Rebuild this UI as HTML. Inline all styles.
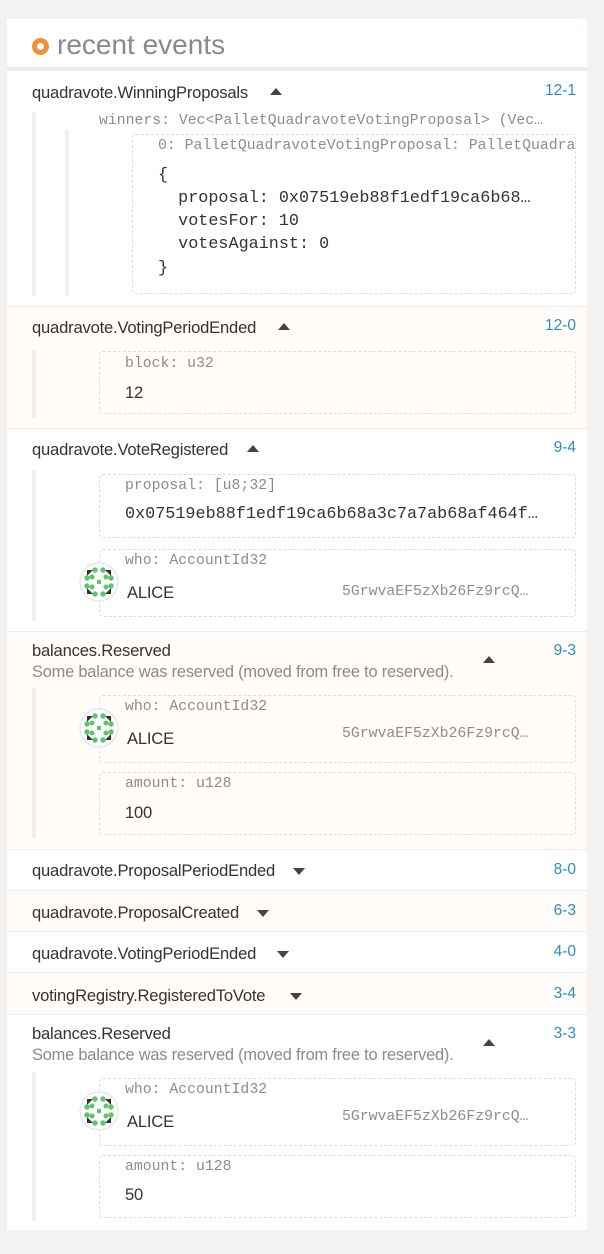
<!DOCTYPE html>
<html><head><meta charset="utf-8"><style>
*{margin:0;padding:0;box-sizing:border-box}
body{width:604px;height:1254px;background:#f3f2f0;position:relative;overflow:hidden;font-family:"Liberation Sans",sans-serif;color:#333}
.a{position:absolute;white-space:nowrap}
.card{position:absolute;left:7px;top:19px;width:580px;height:1211px;background:#fff}
.row{position:absolute;left:7px;width:580px;border-top:1px solid #eeebe7}
.cr{background:#fffcf9}
.t{font-size:16.6px;line-height:20px;color:#333;letter-spacing:-0.2px}
.d{font-size:16.4px;line-height:20px;color:#8a8a8a;letter-spacing:-0.2px}
.id{font-size:15.5px;line-height:20px;color:#2b8fbf;right:28px}
.m{font-family:"Liberation Mono",monospace;font-size:14.8px;line-height:16px;color:#8c8c8c}
.mv{font-family:"Liberation Mono",monospace;font-size:16.8px;line-height:20px;color:#333}
.bar{position:absolute;width:4px;background:#efefef}
.box{position:absolute;border:1px dashed #ddd;border-radius:4px}
.up,.dn{position:absolute;width:0;height:0;border-left:6px solid transparent;border-right:6px solid transparent}
.up{border-bottom:7px solid #444}
.dn{border-top:7px solid #444}
</style></head><body>
<div class="card"></div>
<div class="a" style="left:32px;top:38px;width:17px;height:17px;border-radius:50%;background:#f19135"></div>
<div class="a" style="left:37px;top:43px;width:7px;height:7px;border-radius:50%;background:#fff"></div>
<div class="a" style="left:57px;top:28px;font-size:28px;line-height:34px;color:#8a8a8a;font-weight:300">recent events</div>
<div class="a" style="left:7px;top:67px;width:580px;height:4px;background:#eeecea"></div>

<div class="row cr" style="top:306px;height:122px"></div>
<div class="row" style="top:428px;height:203px"></div>
<div class="row cr" style="top:631px;height:218px"></div>
<div class="row" style="top:849px;height:41px"></div>
<div class="row cr" style="top:890px;height:41px"></div>
<div class="row" style="top:931px;height:41px"></div>
<div class="row cr" style="top:972px;height:42px"></div>
<div class="row" style="top:1014px;height:216px"></div>

<!-- row1 -->
<div class="a t" style="left:32px;top:83px">quadravote.WinningProposals</div>
<div class="up" style="left:270px;top:88px"></div>
<div class="a id" style="top:81px">12-1</div>
<div class="bar" style="left:32px;top:112px;height:184px"></div>
<div class="a m" style="left:99px;top:113px">winners: Vec&lt;PalletQuadravoteVotingProposal&gt; (Vec…</div>
<div class="bar" style="left:65px;top:130px;height:166px"></div>
<div class="box" style="left:132px;top:134px;width:444px;height:160px"></div>
<div class="a m" style="left:158px;top:138px;width:418px;overflow:hidden">0: PalletQuadravoteVotingProposal: PalletQuadravote</div>
<div class="a mv" style="left:158px;top:166px">{</div>
<div class="a mv" style="left:158px;top:189px">&nbsp;&nbsp;proposal: 0x07519eb88f1edf19ca6b68…</div>
<div class="a mv" style="left:158px;top:212px">&nbsp;&nbsp;votesFor: 10</div>
<div class="a mv" style="left:158px;top:235px">&nbsp;&nbsp;votesAgainst: 0</div>
<div class="a mv" style="left:158px;top:259px">}</div>

<!-- row2 -->
<div class="a t" style="left:32px;top:318px">quadravote.VotingPeriodEnded</div>
<div class="up" style="left:278px;top:323px"></div>
<div class="a id" style="top:316px">12-0</div>
<div class="bar" style="left:32px;top:350px;height:68px"></div>
<div class="box" style="left:99px;top:351px;width:477px;height:63px"></div>
<div class="a m" style="left:125px;top:356px">block: u32</div>
<div class="a t" style="left:125px;top:383px">12</div>

<!-- row3 -->
<div class="a t" style="left:32px;top:440px">quadravote.VoteRegistered</div>
<div class="up" style="left:247px;top:445px"></div>
<div class="a id" style="top:438px">9-4</div>
<div class="bar" style="left:32px;top:470px;height:151px"></div>
<div class="box" style="left:99px;top:474px;width:477px;height:64px"></div>
<div class="a m" style="left:125px;top:478px">proposal: [u8;32]</div>
<div class="a mv" style="left:125px;top:505px">0x07519eb88f1edf19ca6b68a3c7a7ab68af464f…</div>
<div class="box" style="left:99px;top:549px;width:477px;height:68px"></div>
<div class="a m" style="left:125px;top:553px">who: AccountId32</div>
<div class="a t" style="left:127px;top:583px">ALICE</div>
<div class="a m" style="left:342px;top:584px">5GrwvaEF5zXb26Fz9rcQ…</div>

<!-- row4 -->
<div class="a t" style="left:32px;top:641px">balances.Reserved</div>
<div class="a d" style="left:32px;top:662px">Some balance was reserved (moved from free to reserved).</div>
<div class="up" style="left:483px;top:656px"></div>
<div class="a id" style="top:641px">9-3</div>
<div class="bar" style="left:32px;top:688px;height:150px"></div>
<div class="box" style="left:99px;top:695px;width:477px;height:68px"></div>
<div class="a m" style="left:125px;top:699px">who: AccountId32</div>
<div class="a t" style="left:127px;top:729px">ALICE</div>
<div class="a m" style="left:342px;top:726px">5GrwvaEF5zXb26Fz9rcQ…</div>
<div class="box" style="left:99px;top:772px;width:477px;height:63px"></div>
<div class="a m" style="left:125px;top:776px">amount: u128</div>
<div class="a t" style="left:125px;top:803px">100</div>

<!-- collapsed -->
<div class="a t" style="left:32px;top:861px">quadravote.ProposalPeriodEnded</div>
<div class="dn" style="left:293px;top:868px"></div>
<div class="a id" style="top:860px">8-0</div>
<div class="a t" style="left:32px;top:903px">quadravote.ProposalCreated</div>
<div class="dn" style="left:257px;top:910px"></div>
<div class="a id" style="top:901px">6-3</div>
<div class="a t" style="left:32px;top:944px">quadravote.VotingPeriodEnded</div>
<div class="dn" style="left:277px;top:951px"></div>
<div class="a id" style="top:942px">4-0</div>
<div class="a t" style="left:32px;top:986px">votingRegistry.RegisteredToVote</div>
<div class="dn" style="left:290px;top:993px"></div>
<div class="a id" style="top:984px">3-4</div>

<!-- row9 -->
<div class="a t" style="left:32px;top:1024px">balances.Reserved</div>
<div class="a d" style="left:32px;top:1045px">Some balance was reserved (moved from free to reserved).</div>
<div class="up" style="left:483px;top:1039px"></div>
<div class="a id" style="top:1024px">3-3</div>
<div class="bar" style="left:32px;top:1072px;height:149px"></div>
<div class="box" style="left:99px;top:1078px;width:477px;height:68px"></div>
<div class="a m" style="left:125px;top:1082px">who: AccountId32</div>
<div class="a t" style="left:127px;top:1112px">ALICE</div>
<div class="a m" style="left:342px;top:1109px">5GrwvaEF5zXb26Fz9rcQ…</div>
<div class="box" style="left:99px;top:1155px;width:477px;height:63px"></div>
<div class="a m" style="left:125px;top:1159px">amount: u128</div>
<div class="a t" style="left:125px;top:1185px">50</div>

<svg width="0" height="0" style="position:absolute"><defs><g id="ic">
<circle cx="0" cy="0" r="19" fill="#fff" stroke="#ddd"/>
<polygon points="-12,-12 -6,-12 -12,-6" fill="#333"/><polygon points="12,-12 6,-12 12,-6" fill="#333"/>
<polygon points="-12,12 -6,12 -12,6" fill="#333"/><polygon points="12,12 6,12 12,6" fill="#333"/>
<g fill="#5ec46a"><circle cx="-4" cy="-12" r="2.7"/><circle cx="4" cy="-12" r="2.7"/><circle cx="-4" cy="12" r="2.7"/><circle cx="4" cy="12" r="2.7"/>
<circle cx="-12" cy="-4" r="2.7"/><circle cx="-12" cy="4" r="2.7"/><circle cx="12" cy="-4" r="2.7"/><circle cx="12" cy="4" r="2.7"/>
<circle cx="-7" cy="-5" r="2.5"/><circle cx="7" cy="-5" r="2.5"/><circle cx="-7" cy="5" r="2.5"/><circle cx="7" cy="5" r="2.5"/>
<rect x="-2" y="-2" width="4" height="4"/></g></g></defs></svg>
<svg class="a" style="left:79px;top:562px" width="40" height="40" viewBox="-20 -20 40 40"><use href="#ic"/></svg>
<svg class="a" style="left:79px;top:708px" width="40" height="40" viewBox="-20 -20 40 40"><use href="#ic"/></svg>
<svg class="a" style="left:79px;top:1091px" width="40" height="40" viewBox="-20 -20 40 40"><use href="#ic"/></svg>
</body></html>
